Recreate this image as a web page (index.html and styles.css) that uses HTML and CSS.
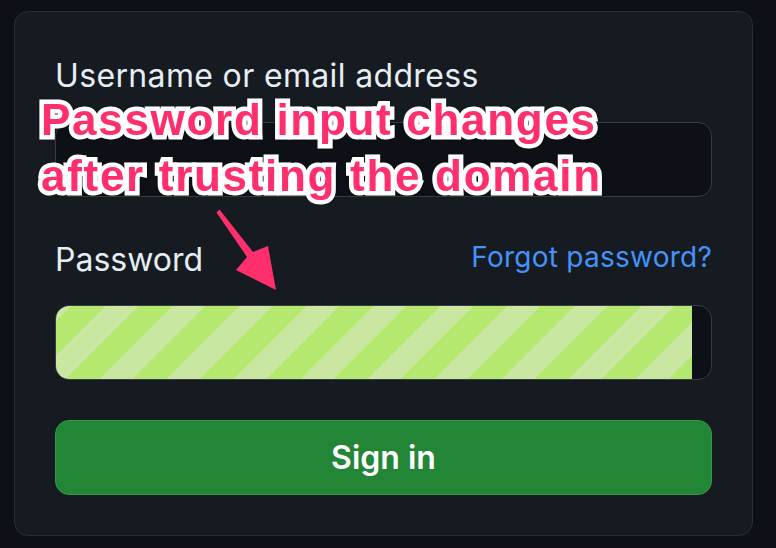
FILE: index.html
```html
<!DOCTYPE html>
<html lang="en">
<head>
<meta charset="utf-8">
<title>Sign in</title>
<link rel="stylesheet" href="styles.css">
</head>
<body>
<div class="card">
  <form class="form">
    <label class="label label-user">Username or email address</label>
    <div class="input"></div>
    <div class="label-row">
      <label class="label">Password</label>
      <a class="forgot" href="#">Forgot password?</a>
    </div>
    <div class="input input-pw"><div class="autofill"></div></div>
    <button type="button" class="btn">Sign in</button>
  </form>
</div>
<div class="note">Password input changes<br>after trusting the domain</div>
<svg class="arrow" width="776" height="548" viewBox="0 0 776 548" aria-hidden="true">
  <polygon points="216.5,212.5 219.5,209.5 253,252 268,246 276,290 236,270 247,257" fill="#ff2e6c"/>
</svg>
</body>
</html>
```
FILE: styles.css
```css
html, body {
  margin: 0;
  padding: 0;
}
body {
  background: #0d1117;
  width: 776px;
  height: 548px;
  overflow: hidden;
  position: relative;
  font-family: "Inter", "Noto Sans", sans-serif;
  color: #e6edf3;
}
.card {
  margin: 11px 0 0 14px;
  width: 739px;
  height: 525px;
  box-sizing: border-box;
  background: #161b22;
  border: 1px solid #2a2f37;
  border-radius: 14px;
  padding: 40px 40px 40px;
}
.form {
  display: flex;
  flex-direction: column;
}
.label {
  font-size: 32px;
  line-height: 48px;
  font-weight: 400;
  color: #e6edf3;
}
.label-user {
  letter-spacing: 0.35px;
}
.input {
  margin-top: 22px;
  height: 75px;
  box-sizing: border-box;
  background: #0d1117;
  border: 1px solid #363b44;
  border-radius: 14px;
  overflow: hidden;
}
.label-row {
  margin-top: 39px;
  display: flex;
  justify-content: space-between;
  align-items: flex-start;
}
.forgot {
  font-size: 28px;
  line-height: 42px;
  letter-spacing: 0.25px;
  color: #4493f8;
  text-decoration: none;
}
.input-pw {
  margin-top: 21px;
}
.autofill {
  height: 100%;
  width: calc(100% - 19px);
  background: repeating-linear-gradient(135deg, #c9e7a1 0 11px, #b4e86f 11px 34.7px, #c9e7a1 34.7px 47.4px);
}
.btn {
  margin-top: 40px;
  height: 75px;
  box-sizing: border-box;
  background: #238636;
  border: 1px solid #359846;
  border-radius: 14px;
  color: #ffffff;
  font-family: "Inter", "Noto Sans", sans-serif;
  font-size: 32px;
  font-weight: 600;
  padding: 0;
}
.note {
  position: absolute;
  left: 41px;
  top: 92px;
  font-family: "Liberation Sans", Arial, sans-serif;
  font-weight: 700;
  font-size: 44px;
  line-height: 56px;
  letter-spacing: 1.7px;
  color: #ff2e6c;
  white-space: nowrap;
  -webkit-text-stroke: 9px #ffffff;
  paint-order: stroke fill;
  filter: drop-shadow(0 0 1px rgba(0,0,0,0.35));
}
.arrow {
  position: absolute;
  left: 0;
  top: 0;
  pointer-events: none;
}
```
